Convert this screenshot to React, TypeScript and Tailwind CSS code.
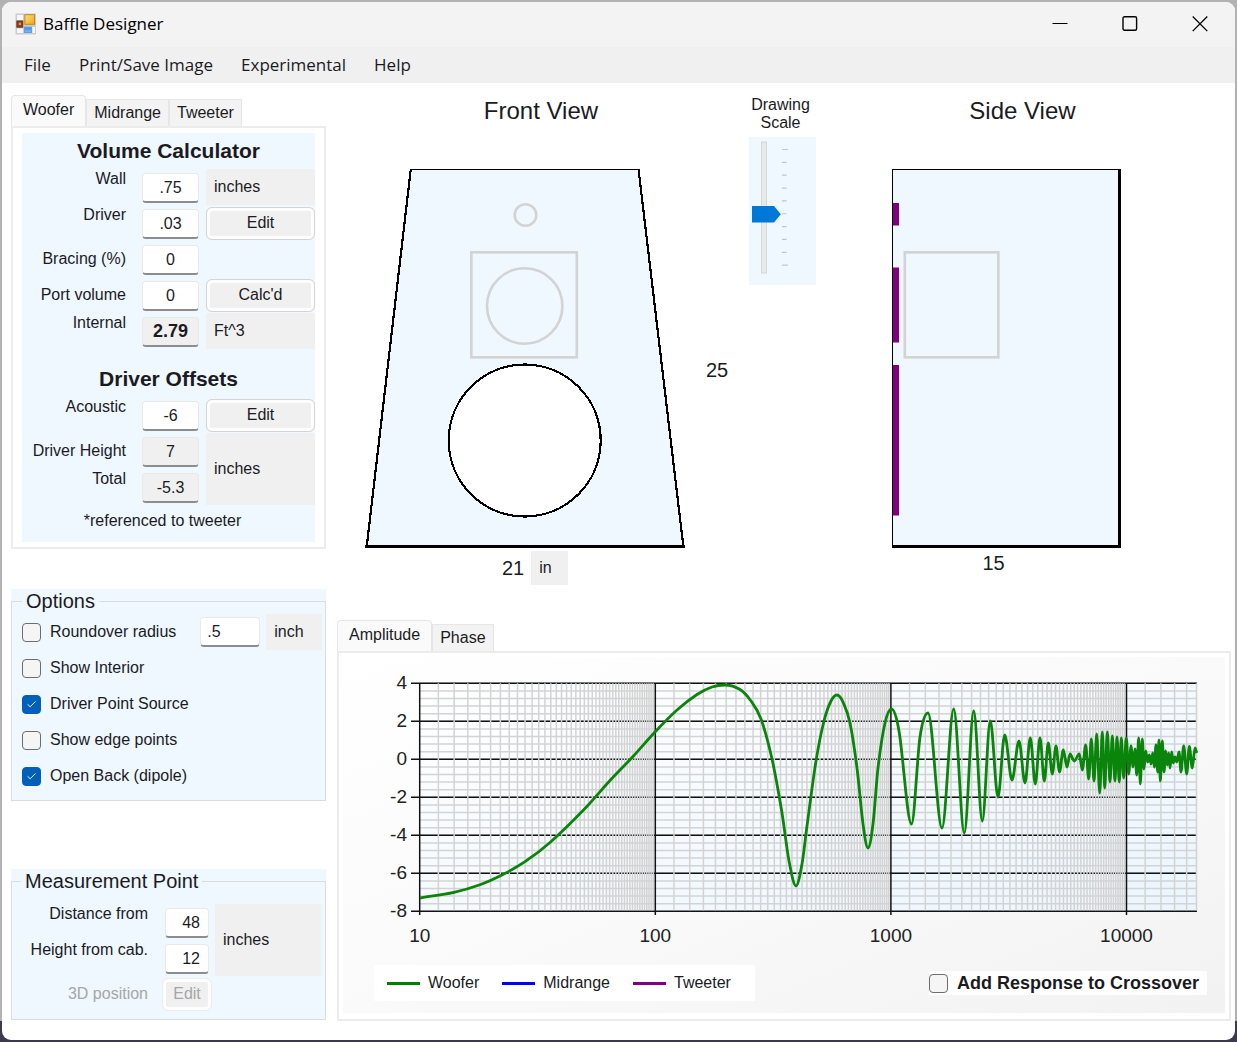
import { Check } from 'lucide-react';
import { clsx } from 'clsx';

const DECADES = [419.7, 655.3, 890.9, 1126.5];
const DECADE_WIDTH = 235.6;
const PLOT = { left: 419.7, right: 1197, top: 682.3, bottom: 910.3 };
const Y_LABELS = [4, 2, 0, -2, -4, -6, -8];

// samples along the slow sweep, then alternating peaks and dips of the fast part
const WOOFER = [
  [420, 897], [454, 891.3], [480, 883.7], [501, 874.5], [525, 860.7], [550, 841.5], [584, 808.5],
  [610, 779.5], [633, 755.5], [655, 731], [677, 709], [697, 693.5], [712, 686], [725, 684], [740, 688.5],
  [751, 700], [761, 718], [772, 758], [782, 812], [789, 860], [796, 885], [802, 863], [807, 825],
  [816, 760], [824, 720], [831, 700], [837, 694], [843, 701], [850, 722], [857, 767], [863, 823],
  [868, 847], [873, 823], [878, 767], [885, 722], [891.5, 708], [899, 730], [911.5, 823], [920, 736],
  [928, 712], [942, 827], [953.7, 708], [964.3, 832], [973.7, 710], [982.3, 820],
  [990.3, 720], [998, 796], [1004.7, 734], [1012, 779], [1019, 740], [1025, 782], [1030.3, 737],
  [1035.3, 783], [1040, 737], [1044.3, 780], [1048.3, 742], [1052.3, 773], [1056, 745], [1059.5, 771],
  [1063.3, 749], [1067, 766], [1070, 753], [1074.3, 760], [1079.3, 753], [1082.3, 769], [1085.7, 744],
  [1088.7, 778], [1091.3, 738], [1094, 780], [1096.7, 733], [1099.7, 792], [1102.3, 731], [1104.7, 787],
  [1107.3, 731], [1110, 781], [1112.3, 735], [1115, 780], [1117, 736], [1119.3, 781], [1121.3, 737],
  [1123.7, 777], [1126.3, 737], [1128.7, 773], [1131, 745], [1133, 766], [1135, 748], [1136.7, 774],
  [1138.7, 737], [1140.3, 783], [1142.3, 738], [1144, 768], [1145.7, 750], [1147.7, 761], [1149.3, 754],
  [1151, 763], [1152.7, 752], [1154.3, 766], [1156, 744], [1157.7, 771], [1159, 739], [1160.3, 780],
  [1162.3, 740], [1164, 771], [1165.7, 750], [1167.3, 764], [1168.7, 752], [1170, 767], [1171.7, 751],
  [1173.3, 762], [1175, 756], [1176.7, 761], [1179, 751], [1181, 771], [1183.7, 745], [1186.7, 773],
  [1189.3, 745.5], [1192.3, 767], [1195, 747], [1196.7, 752],
];

function slopeAt(points: number[][], i: number) {
  const a = points[Math.max(i - 1, 0)];
  const b = points[i];
  const c = points[Math.min(i + 1, points.length - 1)];
  if (i > 0 && i < points.length - 1 && (b[1] - a[1]) * (c[1] - b[1]) <= 0) return 0;
  return (c[1] - a[1]) / (c[0] - a[0]);
}

function smoothPath(points: number[][]) {
  let d = `M${points[0][0]},${points[0][1]}`;
  for (let i = 0; i < points.length - 1; i++) {
    const [x0, y0] = points[i];
    const [x1, y1] = points[i + 1];
    const h = (x1 - x0) / 3;
    d += `C${x0 + h},${y0 + h * slopeAt(points, i)} ${x1 - h},${y1 - h * slopeAt(points, i + 1)} ${x1},${y1}`;
  }
  return d;
}

function minorX() {
  const xs: number[] = [];
  for (const start of DECADES) {
    for (let m = 1.2; m < 9.9; m += 0.2) {
      const x = start + Math.log10(m) * DECADE_WIDTH;
      if (x < PLOT.right + 1) xs.push(Math.min(x, PLOT.right - 0.5));
    }
  }
  return xs;
}

function ResponseChart() {
  const step = (PLOT.bottom - PLOT.top) / 30;
  return (
    <svg viewBox="347 656 874 300" className="block w-full" role="img" aria-label="Amplitude response">
      <defs>
        <linearGradient id="plot" x1="0" y1="0" x2="1" y2="1">
          <stop offset="0" stopColor="#ffffff" />
          <stop offset="1" stopColor="#eaf5ff" />
        </linearGradient>
      </defs>
      <rect x={PLOT.left} y={PLOT.top} width={PLOT.right - PLOT.left} height={PLOT.bottom - PLOT.top} fill="url(#plot)" />
      <g stroke="#d3d3d3" strokeWidth="1.5">
        {Array.from({ length: 30 }, (_, i) => (
          <line key={i} x1={PLOT.left} x2={PLOT.right} y1={PLOT.top + i * step} y2={PLOT.top + i * step} />
        ))}
      </g>
      <g stroke="#111" strokeWidth="1.4">
        {Y_LABELS.map((v, i) => (
          <line key={v} x1="411" x2={PLOT.right} y1={PLOT.top + i * 38} y2={PLOT.top + i * 38} />
        ))}
      </g>
      <g stroke="#d3d3d3" strokeWidth="1.5">
        {minorX().map((x) => (
          <line key={x} x1={x} x2={x} y1={PLOT.top} y2={PLOT.bottom - 1} />
        ))}
      </g>
      <g stroke="#111" strokeWidth="1.5">
        {DECADES.map((x) => (
          <line key={x} x1={x} x2={x} y1={PLOT.top} y2="914" />
        ))}
      </g>
      <path d={smoothPath(WOOFER)} fill="none" stroke="#0a840a" strokeWidth="2.8" strokeLinejoin="round" />
      <g fill="#222" fontSize="19" fontFamily="Liberation Sans, Arial, sans-serif">
        {Y_LABELS.map((v, i) => (
          <text key={v} x="407" y={688 + i * 38} textAnchor="end">{v}</text>
        ))}
        {DECADES.map((x, i) => (
          <text key={x} x={x} y="941" textAnchor="middle">{10 ** (i + 1)}</text>
        ))}
      </g>
    </svg>
  );
}

function FormsIcon() {
  return (
    <svg width="22" height="22" viewBox="0 0 22 22" aria-hidden="true">
      <defs>
        <linearGradient id="gold" x1="0" y1="0" x2="1" y2="1">
          <stop offset="0" stopColor="#ffe27a" />
          <stop offset="1" stopColor="#eda516" />
        </linearGradient>
        <linearGradient id="sky" x1="0" y1="0" x2="0" y2="1">
          <stop offset="0" stopColor="#3d86dc" />
          <stop offset="1" stopColor="#7fc0fb" />
        </linearGradient>
      </defs>
      <rect x="0.5" y="0.5" width="20.5" height="21" fill="#c9cbcf" />
      <rect x="2" y="2" width="6" height="5" fill="#f7f7f7" />
      <rect x="2" y="15.5" width="6" height="4.500" fill="#f7f7f7" />
      <rect x="17.500" y="14" width="2.500" height="6" fill="#f7f7f7" />
      <rect x="9.900" y="1.700" width="9.600" height="9.600" fill="url(#gold)" stroke="#c98516" />
      <rect x="1.900" y="8" width="5.800" height="6.200" fill="#8e3f17" stroke="#7a3210" />
      <rect x="3.800" y="9.700" width="2.200" height="2.400" fill="#e09a5c" />
      <rect x="9.500" y="14.200" width="7" height="5.300" fill="url(#sky)" stroke="#5e9fe0" />
    </svg>
  );
}

const CAPTION_BUTTONS = [
  { label: 'Minimize', shape: <path d="M0.500 7.500h15" strokeWidth="1" /> },
  { label: 'Maximize', shape: <rect x="1" y="0.700" width="13.600" height="13.600" rx="1.500" strokeWidth="1.400" /> },
  { label: 'Close', shape: <path d="M0.700 0.500l14.600 14.600M15.300 0.500l-14.600 14.600" strokeWidth="1.300" /> },
];

function Tab({ label, active }: { label: string; active?: boolean }) {
  return (
    <button
      type="button"
      role="tab"
      aria-selected={!!active}
      className={clsx(
        'border border-b-0 border-[#e6e6e6]',
        active ? 'h-[31px] rounded-t-sm bg-[#fafafa] px-[11px] pb-0.5' : 'h-[27px] bg-[#f3f3f3] px-[7px]',
      )}
    >
      {label}
    </button>
  );
}

function Field({ id, value, readOnly, className }: { id: string; value: string; readOnly?: boolean; className?: string }) {
  return (
    <input
      id={id}
      defaultValue={value}
      readOnly={readOnly}
      className={clsx(
        'h-[30px] min-w-0 rounded-sm border border-b-2 border-[#e9e9e9] border-b-[#8c8c8c] outline-none',
        readOnly ? 'bg-[#f0f0f0]' : 'bg-white',
        className,
      )}
    />
  );
}

function PushButton({ label, disabled }: { label: string; disabled?: boolean }) {
  return (
    <button
      type="button"
      disabled={disabled}
      className="h-[33px] self-center rounded-md border border-[#d4d4d4] bg-[#f0f0f0] shadow-[inset_0_0_0_3px_#fdfdfd] disabled:border-[#ececec] disabled:text-[#a6a6a6]"
    >
      {label}
    </button>
  );
}

function CheckBox({ id, label, checked, bold }: { id: string; label: string; checked?: boolean; bold?: boolean }) {
  return (
    <div className="flex items-center gap-[9px]">
      <span className="relative flex size-[19px]">
        <input
          id={id}
          type="checkbox"
          defaultChecked={checked}
          className="peer size-[19px] appearance-none rounded-[4px] border border-[#6d6d6d] bg-[#f5f5f5] checked:border-[#005fb8] checked:bg-[#005fb8]"
        />
        <Check className="pointer-events-none absolute inset-1 hidden size-[11px] text-white peer-checked:block" strokeWidth={2} />
      </span>
      <label htmlFor={id} className={clsx(bold && 'text-lg leading-6 font-bold')}>{label}</label>
    </div>
  );
}

const rowGrid = 'grid auto-rows-[36px] grid-cols-[113px_57px_1fr] gap-x-[7px]';
const rowLabel = 'pr-[9px] text-right leading-5';
const rowField = 'mt-1 text-center';
const unit = 'flex items-center bg-[#f0f0f0] pl-2';

function WooferPanel() {
  return (
    <div className="border-2 border-[#ececec] bg-white px-[9px] py-[5px]">
      <div className="bg-[#eff7ff] pb-[5px]">
        <h2 className="text-center text-[21px] leading-9 font-bold">Volume Calculator</h2>
        <div className={rowGrid}>
          <label htmlFor="wall" className={rowLabel}>Wall</label>
          <Field id="wall" value=".75" className={rowField} />
          <span className={unit}>inches</span>

          <label htmlFor="driver" className={rowLabel}>Driver</label>
          <Field id="driver" value=".03" className={rowField} />
          <PushButton label="Edit" />

          <label htmlFor="bracing" className={clsx(rowLabel, 'self-center')}>Bracing (%)</label>
          <Field id="bracing" value="0" className={rowField} />
          <span />

          <label htmlFor="port" className={clsx(rowLabel, 'self-center')}>Port volume</label>
          <Field id="port" value="0" className={rowField} />
          <PushButton label="Calc'd" />

          <label htmlFor="internal" className={rowLabel}>Internal</label>
          <Field id="internal" value="2.79" readOnly className={clsx(rowField, 'text-lg font-bold')} />
          <span className={unit}>Ft^3</span>
        </div>

        <h2 className="mt-3 text-center text-[21px] leading-9 font-bold">Driver Offsets</h2>
        <div className={rowGrid}>
          <label htmlFor="acoustic" className={rowLabel}>Acoustic</label>
          <Field id="acoustic" value="-6" className={rowField} />
          <PushButton label="Edit" />

          <label htmlFor="driver-height" className={clsx(rowLabel, 'self-center')}>Driver Height</label>
          <Field id="driver-height" value="7" readOnly className={rowField} />
          <span className={clsx(unit, 'row-span-2')}>inches</span>

          <label htmlFor="total" className={rowLabel}>Total</label>
          <Field id="total" value="-5.3" readOnly className={rowField} />
        </div>
        <p className="pr-3 text-center leading-8">*referenced to tweeter</p>
      </div>
    </div>
  );
}

function Options() {
  return (
    <div className="mt-10 bg-[#eff7ff]">
      <fieldset className="border border-[#dadde0] pb-1.5 pl-2.5">
        <legend className="px-1 text-xl leading-6">Options</legend>
        <div className="mt-px grid auto-rows-[36px] items-center">
          <div className="flex items-center">
            <CheckBox id="roundover" label="Roundover radius" />
            <Field id="radius" value=".5" className="ml-6 w-[60px] pl-1.5" />
            <label htmlFor="radius" className={clsx(unit, 'ml-1.5 h-9 w-14')}>inch</label>
          </div>
          <CheckBox id="interior" label="Show Interior" />
          <CheckBox id="point-source" label="Driver Point Source" checked />
          <CheckBox id="edge-points" label="Show edge points" />
          <CheckBox id="open-back" label="Open Back (dipole)" checked />
        </div>
      </fieldset>
    </div>
  );
}

function MeasurementPoint() {
  return (
    <div className="mt-[68px] bg-[#eff7ff]">
      <fieldset className="border border-[#dadde0] pr-1 pb-[7px] pl-[9px]">
        <legend className="px-1 text-xl leading-6">Measurement Point</legend>
        <div className="mt-[11px] grid auto-rows-[36px] grid-cols-[138px_50px_1fr] gap-x-[3px]">
          <label htmlFor="distance" className="pr-[11px] text-right leading-5">Distance from</label>
          <Field id="distance" value="48" className="mx-[3px] mt-1 pr-2 text-right" />
          <span className={clsx(unit, 'row-span-2')}>inches</span>

          <label htmlFor="height" className="pr-[11px] text-right leading-5">Height from cab.</label>
          <Field id="height" value="12" className="mx-[3px] mt-1 pr-2 text-right" />

          <span className="self-center pr-[11px] text-right text-[#a6a6a6]">3D position</span>
          <PushButton label="Edit" disabled />
        </div>
      </fieldset>
    </div>
  );
}

function FrontView() {
  return (
    <section>
      <h2 className="pr-1 text-center text-2xl leading-[30px]">Front View</h2>
      <div className="mt-[41px] flex items-center justify-center gap-5 pl-1.5">
        <svg width="322" height="382" viewBox="364 167 322 382" role="img" aria-label="Front of the cabinet">
          <path d="M411 169.5H638.5L683.5 546H366.500Z" fill="#eff7ff" />
          <g stroke="#000" fill="none" shapeRendering="crispEdges">
            <path d="M410 169.5H639" strokeWidth="1" />
            <path d="M410.800 169L366.800 546M638.500 169L683.300 546" strokeWidth="2.200" />
            <path d="M365 546.500H685" strokeWidth="3" />
          </g>
          <g stroke="#d3d3d3" strokeWidth="2.600" fill="none">
            <circle cx="525.500" cy="215" r="10.800" />
            <rect x="471.300" y="252.300" width="105.500" height="105" />
            <circle cx="524.700" cy="306" r="37.700" />
          </g>
          <circle cx="524.700" cy="440.500" r="76" fill="#fff" stroke="#000" strokeWidth="2.200" shapeRendering="crispEdges" />
        </svg>
        <span className="mt-6 text-xl leading-6">25</span>
      </div>
      <div className="mt-0.5 flex justify-center gap-[7px] pr-4">
        <span className="text-xl leading-[34px]">21</span>
        <span className={clsx(unit, 'h-[34px] w-[37px]')}>in</span>
      </div>
    </section>
  );
}

function ScaleSlider() {
  return (
    <div>
      <label htmlFor="scale" className="block pr-1 text-center leading-[18px]">Drawing Scale</label>
      <div className="relative mt-[5px] bg-[#eff7ff]">
        <svg viewBox="749 137 67 148" className="block w-full" aria-hidden="true">
          <rect x="761.500" y="142" width="5" height="131" fill="#e7eaea" stroke="#d6d6d6" />
          <g stroke="#c4c4c4" strokeWidth="1.200">
            {Array.from({ length: 10 }, (_, i) => {
              const y = 149.500 + i * 12.850;
              return <line key={i} x1="782" x2={i === 0 || i === 9 ? 788 : 786.500} y1={y} y2={y} />;
            })}
          </g>
          <path d="M752 206h22l6.800 8.300l-6.800 8.200h-22z" fill="#0078d7" />
        </svg>
        <input
          id="scale"
          type="range"
          min={0}
          max={9}
          defaultValue={4}
          className="absolute inset-0 h-full w-full opacity-0 [writing-mode:vertical-lr]"
        />
      </div>
    </div>
  );
}

function SideView() {
  return (
    <section>
      <h2 className="pr-0.5 text-center text-2xl leading-[30px]">Side View</h2>
      <div className="mt-[41px] flex justify-center pr-[35px]">
        <svg width="232" height="382" viewBox="890 167 232 382" role="img" aria-label="Side of the cabinet">
          <rect x="892" y="169" width="228" height="378" fill="#eff7ff" />
          <g stroke="#000" fill="none" shapeRendering="crispEdges">
            <path d="M892.500 548V169.500H1121" strokeWidth="1" />
            <path d="M1119.500 169V548" strokeWidth="3" />
            <path d="M892 546.500H1121" strokeWidth="3" />
          </g>
          <g fill="#800080">
            <rect x="893" y="203" width="6" height="22.500" />
            <rect x="893" y="267.500" width="6" height="75" />
            <rect x="893" y="365" width="6" height="150.500" />
          </g>
          <rect x="904.800" y="252.300" width="93.500" height="105" fill="none" stroke="#d3d3d3" strokeWidth="2.600" />
        </svg>
      </div>
      <p className="mt-0.5 pr-15 text-center text-xl leading-6">15</p>
    </section>
  );
}

const SERIES = [
  { label: 'Woofer', swatch: 'bg-[#008000]' },
  { label: 'Midrange', swatch: 'bg-[#0000ff]' },
  { label: 'Tweeter', swatch: 'bg-[#800080]' },
];

function ChartPanel() {
  return (
    <section>
      <div role="tablist" className="flex items-end">
        <Tab label="Amplitude" active />
        <Tab label="Phase" />
      </div>
      <div className="border-2 border-[#ececec] bg-white px-1 pt-1 pb-1.5">
        <div className="bg-linear-to-br from-white via-[#fafafa] to-[#f2f2f2] px-1 pb-3">
          <ResponseChart />
          <div className="mt-2 flex items-center justify-between pr-3.5 pl-[27px]">
            <ul className="flex h-9 items-center gap-[23px] bg-white pr-6 pl-[13px]">
              {SERIES.map((s) => (
                <li key={s.label} className="flex items-center gap-2">
                  <span className={clsx('h-[3px] w-[33px]', s.swatch)} />
                  {s.label}
                </li>
              ))}
            </ul>
            <div className="bg-white pr-2">
              <CheckBox id="crossover" label="Add Response to Crossover" bold />
            </div>
          </div>
        </div>
      </div>
    </section>
  );
}

const MENU = ['File', 'Print/Save Image', 'Experimental', 'Help'];

export default function App() {
  return (
    <div className="flex min-h-screen flex-col bg-[linear-gradient(to_bottom,#b2b2b2_98%,#3d384e_98%)] p-0.5 font-['Liberation_Sans',Arial,sans-serif] text-base text-[#1b1b1f]">
      <div className="flex flex-1 flex-col overflow-hidden rounded-[9px] bg-white">
        <header className="flex h-[45px] items-center bg-[#f3f3f3] pb-0.5 pl-[13px] font-['Open_Sans','Noto_Sans',sans-serif] text-black">
          <FormsIcon />
          <h1 className="ml-1.5 flex-1 text-[17px]">Baffle Designer</h1>
          {CAPTION_BUTTONS.map((b) => (
            <button key={b.label} type="button" aria-label={b.label} className="flex w-[70px] justify-center">
              <svg width="16" height="16" viewBox="0 0 16 16" fill="none" stroke="currentColor">{b.shape}</svg>
            </button>
          ))}
        </header>
        <nav className="flex h-9 items-center gap-7 bg-[#f0f0f0] pl-[22px] font-['Open_Sans','Noto_Sans',sans-serif] text-[17px]">
          {MENU.map((item) => (
            <button key={item} type="button">{item}</button>
          ))}
        </nav>

        <main className="flex flex-1 gap-[11px] pt-[13px] pr-1 pb-[19px] pl-[9px]">
          <div className="w-[315px] shrink-0">
            <div role="tablist" className="flex h-[30px] items-end">
              <Tab label="Woofer" active />
              <Tab label="Midrange" />
              <Tab label="Tweeter" />
            </div>
            <WooferPanel />
            <Options />
            <MeasurementPoint />
          </div>
          <div className="flex min-w-0 flex-1 flex-col justify-between">
            <div className="grid grid-cols-[412fr_67px_415fr]">
              <FrontView />
              <ScaleSlider />
              <SideView />
            </div>
            <ChartPanel />
          </div>
        </main>
      </div>
    </div>
  );
}
